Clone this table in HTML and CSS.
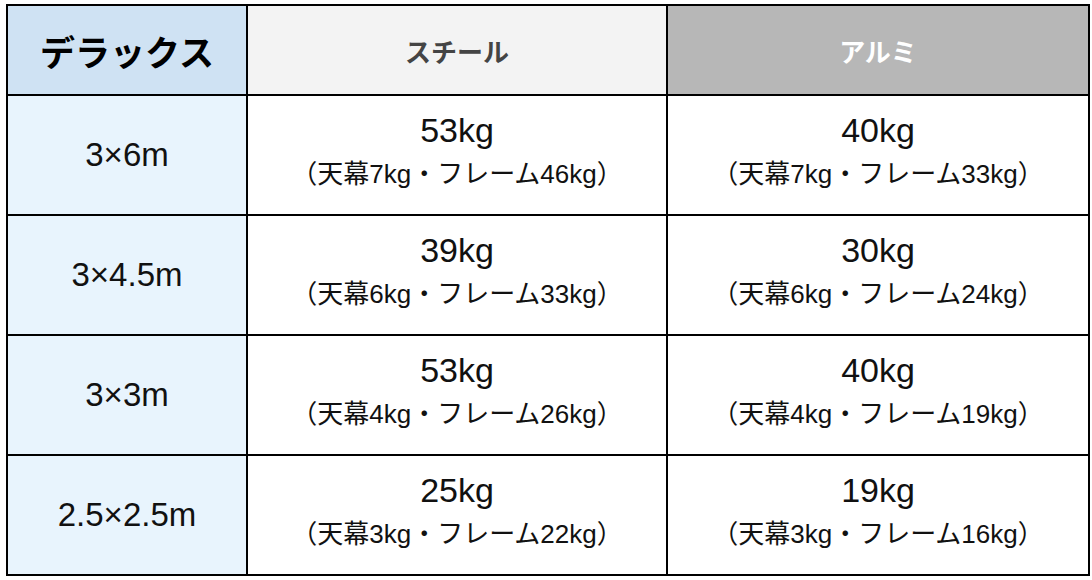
FILE: index.html
```html
<!DOCTYPE html>
<html lang="ja">
<head>
<meta charset="utf-8">
<title>デラックス 重量</title>
<link rel="stylesheet" href="styles.css">
</head>
<body>
<table class="spec">
  <colgroup>
    <col class="c1">
    <col class="c2">
    <col class="c3">
  </colgroup>
  <thead>
    <tr class="head">
      <th class="h-model">デラックス</th>
      <th class="h-steel">スチール</th>
      <th class="h-alu">アルミ</th>
    </tr>
  </thead>
  <tbody>
    <tr>
      <th class="size">3×6m</th>
      <td><div class="main">53kg</div><div class="sub">（天幕7kg・フレーム46kg）</div></td>
      <td><div class="main">40kg</div><div class="sub">（天幕7kg・フレーム33kg）</div></td>
    </tr>
    <tr>
      <th class="size">3×4.5m</th>
      <td><div class="main">39kg</div><div class="sub">（天幕6kg・フレーム33kg）</div></td>
      <td><div class="main">30kg</div><div class="sub">（天幕6kg・フレーム24kg）</div></td>
    </tr>
    <tr>
      <th class="size">3×3m</th>
      <td><div class="main">53kg</div><div class="sub">（天幕4kg・フレーム26kg）</div></td>
      <td><div class="main">40kg</div><div class="sub">（天幕4kg・フレーム19kg）</div></td>
    </tr>
    <tr>
      <th class="size">2.5×2.5m</th>
      <td><div class="main">25kg</div><div class="sub">（天幕3kg・フレーム22kg）</div></td>
      <td><div class="main">19kg</div><div class="sub">（天幕3kg・フレーム16kg）</div></td>
    </tr>
  </tbody>
</table>
</body>
</html>
```

FILE: styles.css
```css
html, body {
  margin: 0;
  padding: 0;
  background: #ffffff;
}

body {
  padding: 4px 0 0 6px;
  font-family: "Liberation Sans", Arial, "Noto Sans CJK JP", sans-serif;
  color: #000;
}

.spec {
  border-collapse: collapse;
  table-layout: fixed;
  width: 1082px;
}

.c1 { width: 240px; }
.c2 { width: 420px; }
.c3 { width: 422px; }

.spec th,
.spec td {
  border: 2px solid #000;
  padding: 0;
  text-align: center;
  vertical-align: middle;
}

.head {
  height: 90px;
}

.spec tbody tr {
  height: 120px;
}

.h-model {
  background: #cfe2f3;
  font-size: 35px;
  font-weight: 700;
  color: #000;
}

.h-steel {
  background: #f3f3f3;
  font-size: 26px;
  font-weight: 700;
  color: #444;
}

.h-alu {
  background: #b7b7b7;
  font-size: 26px;
  font-weight: 700;
  color: #fff;
}

.size {
  background: #e8f4fd;
  font-size: 33px;
  font-weight: 400;
  color: #111;
}

.main {
  font-size: 34px;
  line-height: 40px;
  margin-top: -2px;
  color: #111;
}

.sub {
  font-size: 26px;
  line-height: 48px;
  color: #111;
  text-spacing-trim: space-all;
}
```
